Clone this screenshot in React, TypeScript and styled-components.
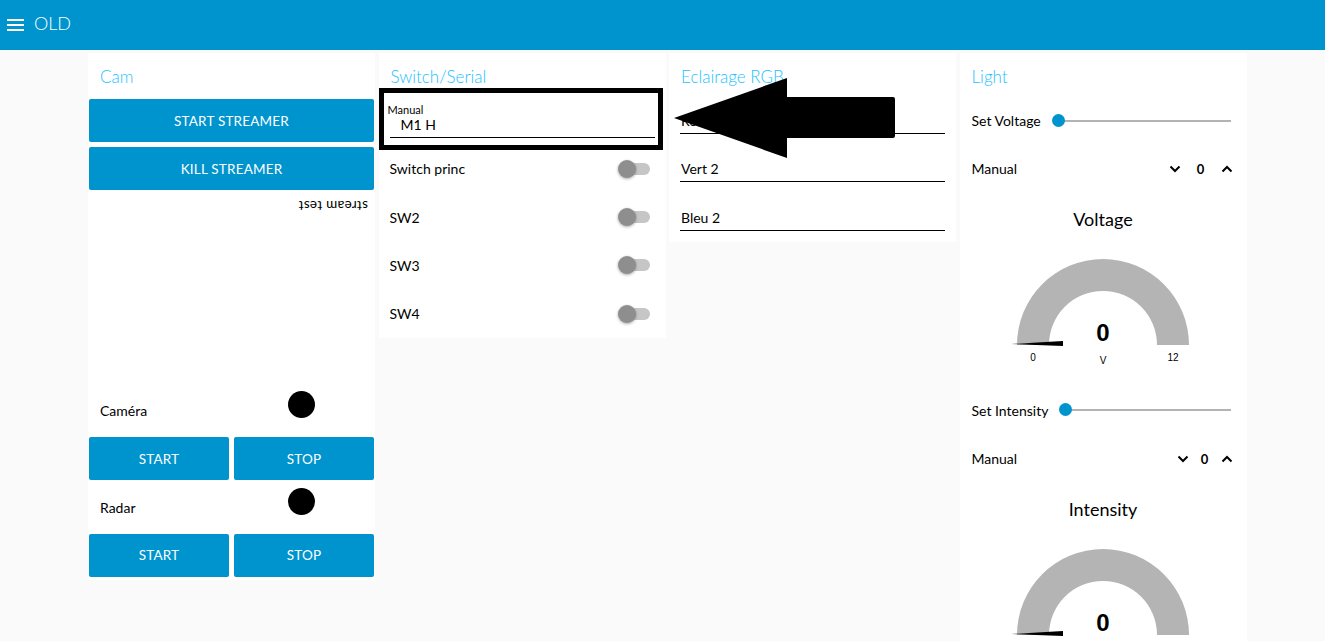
import React from 'react';
import styled, { createGlobalStyle } from 'styled-components';

const BLUE = '#0094ce';
const TITLE_COLOR = '#1bbfff';
const FONT = `Lato, 'Noto Sans', sans-serif`;

const GlobalStyle = createGlobalStyle`
  html, body {
    margin: 0;
    padding: 0;
    overflow: hidden;
    background: #fafafa;
    font-family: ${FONT};
    color: #000;
  }
`;

const Page = styled.div`
  position: relative;
  height: 100vh;
  overflow: hidden;
`;

const TopBar = styled.header`
  display: flex;
  align-items: center;
  gap: 10px;
  height: 50px;
  padding-left: 7px;
  background: ${BLUE};
  color: #fff;
`;

const AppTitle = styled.div`
  font-size: 18px;
  font-weight: 300;
  margin-top: -5px;
`;

const Groups = styled.main`
  display: flex;
  align-items: flex-start;
  gap: 3.5px;
  padding: 3px 0 0 88px;
`;

const Card = styled.section`
  width: 285px;
  padding: 0 1px 3px 1px;
  background: #fff;
`;

const CardTitle = styled.h2`
  margin: 0;
  height: 46px;
  padding-left: 11px;
  line-height: 48px;
  font-size: 17px;
  font-weight: 300;
  color: ${TITLE_COLOR};
`;

const Rows = styled.div`
  display: flex;
  flex-direction: column;
  gap: 5.33px;
`;

const Button = styled.button`
  height: 43px;
  width: 100%;
  border: none;
  border-radius: 2px;
  background: ${BLUE};
  color: #fff;
  font-family: ${FONT};
  font-size: 13.5px;
  text-transform: uppercase;
  letter-spacing: 0.2px;
`;

const ButtonPair = styled.div`
  display: grid;
  grid-template-columns: 1fr 1fr;
  gap: 5px;
`;

const Template = styled.div`
  height: 188px;
`;

const Flipped = styled.div`
  transform: rotate(180deg);
  padding-left: 6px;
  height: 20px;
  line-height: 20px;
  font-size: 13.5px;
  letter-spacing: 0.3px;
`;

const LedRow = styled.div`
  display: grid;
  grid-template-columns: 1fr 1fr;
  align-items: center;
  height: 43px;
  padding-left: 11px;
  font-size: 14px;
`;

const LedLabel = styled.span`
  padding-top: 1px;
`;

const Led = styled.span`
  justify-self: center;
  width: 27px;
  height: 27px;
  margin-bottom: 11px;
  margin-right: 9px;
  border-radius: 50%;
  background: #000;
`;

const SwitchRow = styled.div`
  display: flex;
  align-items: center;
  justify-content: space-between;
  height: 43px;
  padding: 0 15px 0 10px;
  font-size: 14px;
`;

const Toggle = styled.span`
  position: relative;
  width: 30px;
  height: 12px;
  border-radius: 6px;
  background: #c6c6c6;

  &::after {
    content: '';
    position: absolute;
    left: -2px;
    top: -3px;
    width: 18px;
    height: 18px;
    border-radius: 50%;
    background: #8e8e8e;
    box-shadow: 0 1px 3px rgba(0, 0, 0, 0.35);
  }
`;

const Field = styled.div`
  position: relative;
  height: 43px;
  padding: 0 10px;
`;

const FieldLabel = styled.div`
  position: absolute;
  left: 8px;
  top: 4px;
  font-size: 11px;
`;

const FieldValue = styled.div<{ $floating?: boolean }>`
  position: absolute;
  left: ${(p) => (p.$floating ? '21px' : '11px')};
  top: ${(p) => (p.$floating ? '17px' : '13px')};
  font-size: 14px;
`;

const FieldLine = styled.div<{ $floating?: boolean }>`
  position: absolute;
  left: 10px;
  right: 10px;
  top: ${(p) => (p.$floating ? '38px' : '34px')};
  height: 1px;
  background: #000;
`;

const Highlight = styled.div`
  position: absolute;
  left: -1px;
  right: 2px;
  top: -11px;
  bottom: -8px;
  border: 5px solid #000;
  pointer-events: none;
`;

const SliderRow = styled.div`
  display: flex;
  align-items: center;
  height: 43px;
  padding: 0 15px 0 11px;
  font-size: 14px;
`;

const SliderTrack = styled.div`
  position: relative;
  flex: 1;
  height: 2px;
  margin-left: 17px;
  background: #b3b3b3;

  &::before {
    content: '';
    position: absolute;
    left: -6px;
    top: -6px;
    width: 13px;
    height: 13px;
    border-radius: 50%;
    background: ${BLUE};
  }
`;

const NumericRow = styled.div`
  display: flex;
  align-items: center;
  height: 43px;
  padding: 0 13px 0 11px;
  font-size: 14px;
`;

const NumericLabel = styled.span`
  flex: 1;
`;

const NumericValue = styled.span<{ $width: number }>`
  width: ${(p) => p.$width}px;
  text-align: center;
  font-weight: 700;
  font-size: 13px;
`;

const GaugeBox = styled.div`
  height: 188px;
  display: flex;
  flex-direction: column;
  align-items: center;
`;

const GaugeTitle = styled.div`
  height: 47px;
  line-height: 47px;
  font-size: 18px;
`;

const Arrow = styled.svg`
  position: absolute;
  left: 670px;
  top: 74px;
`;

function MenuIcon() {
  return (
    <svg width='17' height='12' viewBox='0 0 17 12'>
      <rect x='0' y='0' width='17' height='2' fill='#fff' />
      <rect x='0' y='5' width='17' height='2' fill='#fff' />
      <rect x='0' y='10' width='17' height='2' fill='#fff' />
    </svg>
  );
}

function Chevron({ up }: { up?: boolean }) {
  return (
    <svg width='12' height='8' viewBox='0 0 12 8'>
      <path d={up ? 'M1.5 6.5 L6 2 L10.5 6.5' : 'M1.5 1.5 L6 6 L10.5 1.5'} fill='none' stroke='#000' strokeWidth='2' />
    </svg>
  );
}

type GaugeProps = { title: string; unit?: string; max?: number };

function Gauge({ title, unit, max }: GaugeProps) {
  const cx = 142;
  const cy = 102;
  const ro = 86;
  const ri = 54;
  const small = { fontFamily: 'Liberation Sans, Arial, sans-serif', fontSize: 10 };
  return (
    <GaugeBox>
      <GaugeTitle>{title}</GaugeTitle>
      <svg width='285' height='141' viewBox='0 0 285 141'>
        <defs>
          <linearGradient id='needle' x1='0' x2='1' y1='0' y2='0'>
            <stop offset='0' stopColor='#555' />
            <stop offset='0.4' stopColor='#000' />
          </linearGradient>
        </defs>
        <path
          d={`M ${cx - ro} ${cy} A ${ro} ${ro} 0 0 1 ${cx + ro} ${cy} L ${cx + ri} ${cy} A ${ri} ${ri} 0 0 0 ${cx - ri} ${cy} Z`}
          fill='#b4b4b4'
        />
        <polygon points={`${cx - 92},${cy - 1} ${cx - 40},${cy - 4} ${cx - 40},${cy + 1}`} fill='url(#needle)' />
        <text x={cx} y={cy - 4} textAnchor='middle' fontFamily='Liberation Sans, Arial, sans-serif' fontWeight='700' fontSize='24'>
          0
        </text>
        {max !== undefined && (
          <>
            <text x={cx - 70} y={cy + 16} textAnchor='middle' {...small}>
              0
            </text>
            <text x={cx + 70} y={cy + 16} textAnchor='middle' {...small}>
              {max}
            </text>
            <text x={cx} y={cy + 19} textAnchor='middle' {...small}>
              {unit}
            </text>
          </>
        )}
      </svg>
    </GaugeBox>
  );
}

export default function App() {
  const switches = ['Switch princ', 'SW2', 'SW3', 'SW4'];
  const colours = ['Rouge 2', 'Vert 2', 'Bleu 2'];
  return (
    <Page>
      <GlobalStyle />
      <TopBar>
        <MenuIcon />
        <AppTitle>OLD</AppTitle>
      </TopBar>
      <Groups>
        <Card>
          <CardTitle>Cam</CardTitle>
          <Rows>
            <Button>Start streamer</Button>
            <Button>Kill streamer</Button>
            <Template>
              <Flipped>stream test</Flipped>
            </Template>
            <LedRow>
              <LedLabel>Caméra</LedLabel>
              <Led />
            </LedRow>
            <ButtonPair>
              <Button>Start</Button>
              <Button>Stop</Button>
            </ButtonPair>
            <LedRow>
              <LedLabel>Radar</LedLabel>
              <Led />
            </LedRow>
            <ButtonPair>
              <Button>Start</Button>
              <Button>Stop</Button>
            </ButtonPair>
          </Rows>
        </Card>

        <Card>
          <CardTitle>Switch/Serial</CardTitle>
          <Rows>
            <Field>
              <FieldLabel>Manual</FieldLabel>
              <FieldValue $floating>M1 H</FieldValue>
              <FieldLine $floating />
              <Highlight />
            </Field>
            {switches.map((name) => (
              <SwitchRow key={name}>
                <span>{name}</span>
                <Toggle />
              </SwitchRow>
            ))}
          </Rows>
        </Card>

        <Card>
          <CardTitle>Eclairage RGB</CardTitle>
          <Rows>
            {colours.map((name) => (
              <Field key={name}>
                <FieldValue>{name}</FieldValue>
                <FieldLine />
              </Field>
            ))}
          </Rows>
        </Card>

        <Card>
          <CardTitle>Light</CardTitle>
          <Rows>
            <SliderRow>
              <span>Set Voltage</span>
              <SliderTrack />
            </SliderRow>
            <NumericRow>
              <NumericLabel>Manual</NumericLabel>
              <Chevron />
              <NumericValue $width={40}>0</NumericValue>
              <Chevron up />
            </NumericRow>
            <Gauge title='Voltage' unit='V' max={12} />
            <SliderRow>
              <span>Set Intensity</span>
              <SliderTrack />
            </SliderRow>
            <NumericRow>
              <NumericLabel>Manual</NumericLabel>
              <Chevron />
              <NumericValue $width={32}>0</NumericValue>
              <Chevron up />
            </NumericRow>
            <Gauge title='Intensity' />
          </Rows>
        </Card>
      </Groups>

      <Arrow width='230' height='90' viewBox='670 74 230 90'>
        <path
          d='M674 118 L787 78 L787 97 L893 97 Q895 97 895 99 L895 136 Q895 138 893 138 L787 138 L787 158 Z'
          fill='#000'
        />
      </Arrow>
    </Page>
  );
}
